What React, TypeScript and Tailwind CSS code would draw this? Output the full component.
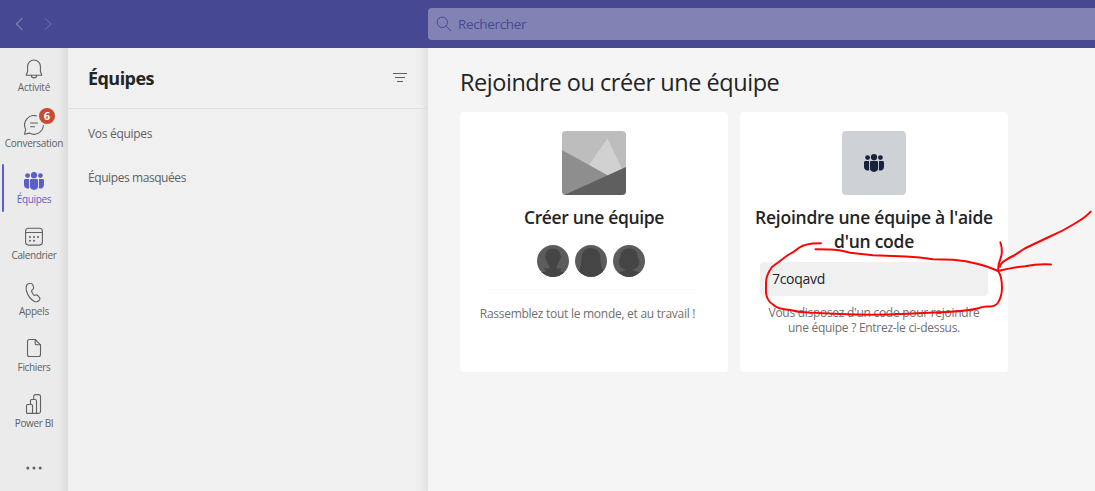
import React from "react";

const people = (
  <g fill="currentColor" stroke="none">
    <circle cx="10" cy="4.2" r="3.1" />
    <circle cx="3.6" cy="4.6" r="2.4" />
    <circle cx="16.4" cy="4.6" r="2.4" />
    <path d="M5.9 9.4Q5.9 8 7.3 8H12.7Q14.1 8 14.1 9.4V14.8A4.1 4.1 0 0 1 5.9 14.8Z" />
    <path d="M5 8V14.8Q5 16 5.4 17A3.6 3.6 0 0 1 0 13.8V9.4Q0 8 1.4 8Z" />
    <path d="M15 8V14.8Q15 16 14.6 17A3.6 3.6 0 0 0 20 13.8V9.4Q20 8 18.6 8Z" />
  </g>
);

const icons = {
  bell: (
    <>
      <path d="M2.2 16.2L3.6 12.5V7.4A6.4 6.4 0 0 1 16.4 7.4V12.5L17.8 16.2Z" />
      <path d="M7.3 16.2A2.7 2.7 0 0 0 12.7 16.2" />
    </>
  ),
  chat: (
    <>
      <path d="M12.4 .9A9.3 9.3 0 0 0 1.7 14.2L.6 19.2L5.5 18.1A9.3 9.3 0 0 0 19.3 10.5" />
      <path d="M6.5 8H13.5M6.5 11.8H10.5" />
    </>
  ),
  people,
  calendar: (
    <>
      <rect x="1.6" y="1.3" width="16.8" height="16.8" rx="3" />
      <path d="M1.6 5.5H18.4" />
      <g fill="currentColor" stroke="none">
        <circle cx="6" cy="10" r="1" /><circle cx="10" cy="10" r="1" /><circle cx="14" cy="10" r="1" />
        <circle cx="6" cy="13.8" r="1" /><circle cx="10" cy="13.8" r="1" />
      </g>
    </>
  ),
  phone: (
    <path d="M4.3 1.3L6 .8Q7.8 .4 8.5 2L9.5 4.4Q10 5.8 8.9 6.8L7.5 8.1Q7.9 10.7 10 13L11.6 12.5Q13 12.1 13.9 13.2L15.5 15.2Q16.5 16.5 15.3 17.7L14.5 18.5Q12.9 20.1 10.4 19Q4.5 15.5 2.5 8.5Q1.2 2.5 4.3 1.3Z" />
  ),
  file: (
    <>
      <path d="M5.4 1.5H11.2L16.5 6.8V16.5Q16.5 18.5 14.6 18.5H5.4Q3.5 18.5 3.5 16.5V3.5Q3.5 1.500 5.4 1.5Z" />
      <path d="M11.2 1.5V5.5Q11.200 6.8 12.5 6.8H16.5" />
    </>
  ),
  powerbi: (
    <>
      <path d="M9.7 5.5V2.5Q9.7 .6 11.6 .6H14.6Q16.5 .6 16.5 2.5V17.5Q16.5 19.4 14.6 19.4H3.5Q2.5 19.4 2.5 18.4V11.5Q2.5 10.5 3.5 10.5H7.5Q8.5 10.5 8.5 11.5V19.4" />
      <path d="M6.5 10.5V6.5Q6.5 5.5 7.5 5.5H11Q12.5 5.5 12.5 7V19.4" />
    </>
  ),
};

type RailItem = { label: string; icon: keyof typeof icons; track: string; shift?: string; badge?: string; active?: boolean };

const rail: RailItem[] = [
  { label: "Activité", icon: "bell", track: "tracking-[-0.2px]", shift: "translate-y-px" },
  { label: "Conversation", icon: "chat", track: "tracking-[-0.27px]", shift: "translate-y-px", badge: "6" },
  { label: "Équipes", icon: "people", track: "tracking-[-0.35px]", shift: "translate-y-px", active: true },
  { label: "Calendrier", icon: "calendar", track: "tracking-[-0.35px]", shift: "translate-y-px" },
  { label: "Appels", icon: "phone", track: "tracking-[-0.25px]", shift: "translate-y-[0.5px]" },
  { label: "Fichiers", icon: "file", track: "tracking-[-0.35px]" },
  { label: "Power BI", icon: "powerbi", track: "tracking-[-0.35px]" },
];

function RailButton({ item }: { item: RailItem }) {
  return (
    <li className={`relative flex h-14 flex-col items-center pt-[10px] ${item.active ? "text-[#5b5fc7]" : "text-[#616161]"}`}>
      {item.active && <span className="absolute left-[2px] top-1 h-12 w-[2px] rounded-full bg-[#5b5fc7]" />}
      <svg className={`h-5 w-5 shrink-0 ${item.shift ?? ""}`} viewBox="0 0 20 20" fill="none" stroke="currentColor" strokeWidth="1.1" strokeLinejoin="round" strokeLinecap="round">
        {icons[item.icon]}
      </svg>
      {item.badge && (
        <span className="absolute left-[39px] top-1 flex h-4 w-4 items-center justify-center rounded-full bg-[#cc4a31] text-[11px] font-bold leading-4 text-white">
          {item.badge}
        </span>
      )}
      <span className={`whitespace-nowrap text-[10px] leading-[18px] ${item.track}`}>{item.label}</span>
    </li>
  );
}

const hair = [
  "M16 3.5C11 3.5 8.5 7 8.8 10C7.3 11 8.3 15 10 16C10.500 19 12 20 12.3 21V23.500L7 23.500Q8 25 10 26L4 27.500Q9 32 16 32T28 27.500L22 26Q24 25 25 23.500L19.700 23.500V21C20 20 21.500 19 22 16C23.700 15 24.700 11 23.2 10C23.500 7 21 3.5 16 3.5Z",
  "M16 3C9.500 3 7 7.500 6.700 12C6.500 18 5.500 23 3.500 26Q9 32 16 32T28.500 26C26.500 23 25.500 18 25.300 12C25 7.500 22.500 3 16 3Z",
  "M16 3.500C10 3.500 7.500 7.500 7.300 12C5 14.500 5.500 20 7.500 22C9 23.800 11 24 12.500 24.500Q12 26 6 27Q10 32 16 32T26 27Q20 26 19.500 24.500C21 24 23 23.800 24.500 22C26.500 20 27 14.500 24.700 12C24.500 7.500 22 3.500 16 3.500Z",
];

export default function App() {
  return (
    <div className="relative flex h-[491px] w-[1095px] flex-col overflow-hidden bg-[#f5f5f5] font-['Open_Sans','Noto_Sans',sans-serif] text-[#242424]">
      <header className="flex h-12 shrink-0 bg-[#464991]">
        <div className="flex w-[428px] items-center gap-[21px] pl-[15px]">
          <svg className="h-3 w-2" viewBox="0 0 8 12" fill="none" stroke="#8486b6" strokeWidth="1.1"><path d="M7.3 .2L1.3 6L7.3 11.8" /></svg>
          <svg className="h-3 w-2" viewBox="0 0 8 12" fill="none" stroke="#6769a5" strokeWidth="1.1"><path d="M1 .2L7 6L1 11.8" /></svg>
        </div>
        <div className="mt-2 flex h-8 flex-1 items-center gap-[6px] rounded-l-[4px] bg-[#8283b4] pl-2 text-[#464991]">
          <svg className="h-4 w-4" viewBox="0 0 16 16" fill="none" stroke="currentColor" strokeWidth="1"><circle cx="6.3" cy="6.3" r="5.2" /><path d="M10.1 10.1L15 15" /></svg>
          <span className="text-[13.5px] leading-5 tracking-[-0.35px]">Rechercher</span>
        </div>
      </header>
      <div className="flex min-h-0 flex-1">
        <nav className="w-[68px] shrink-0 bg-[linear-gradient(to_right,#ebebeb_58px,#dcdcdc_68px)]">
          <ul>
            {rail.map((item) => <RailButton key={item.label} item={item} />)}
          </ul>
          <div className="flex h-14 items-center justify-center">
            <svg className="h-1 w-4" viewBox="0 0 16 4" fill="#616161"><circle cx="1.8" cy="2" r="1.5" /><circle cx="8" cy="2" r="1.5" /><circle cx="14.2" cy="2" r="1.5" /></svg>
          </div>
        </nav>
        <aside className="w-[360px] shrink-0 bg-[linear-gradient(to_right,#f0f0f0_350px,#e2e2e2_360px)]">
          <div className="flex h-[61px] items-center justify-between border-b border-[#e0e0e0] pl-5 pr-[21px]">
            <h1 className="text-[18px] font-bold leading-6 tracking-[-0.55px]">Équipes</h1>
            <svg className="h-[10px] w-[14px]" viewBox="0 0 14 10" stroke="#616161" strokeWidth="1"><path d="M0 .5H14M2 4.5H12M4 8.5H10" /></svg>
          </div>
          <div className="flex flex-col gap-6 pl-5 pt-[15px] text-[12px] leading-5 text-[#616161]">
            <span className="tracking-[-0.3px]">Vos équipes</span>
            <span className="tracking-[-0.42px]">Équipes masquées</span>
          </div>
        </aside>
        <main className="flex-1 pl-8 pt-[18px]">
          <h2 className="h-[46px] whitespace-nowrap text-[23.5px] leading-8 tracking-[-0.46px]">Rejoindre ou créer une équipe</h2>
          <div className="flex gap-3">
            <section className="flex h-[260px] w-[268px] flex-col items-center rounded-[4px] bg-white pt-[19px]">
              <svg className="h-16 w-16 rounded-[4px]" viewBox="0 0 64 64">
                <path fill="#bdbdbd" d="M0 0H64V64H0Z" />
                <path fill="#d1d1d1" d="M45.5 7.5L27 34L45.5 45L60 38Z" />
                <path fill="#8e8e8e" d="M0 19L46 44.5L3 64H0Z" />
                <path fill="#5f5f5f" d="M64 36V64H2Z" />
              </svg>
              <h3 className="mt-[10px] whitespace-nowrap text-[17.5px] font-semibold leading-6 tracking-[-0.35px]">Créer une équipe</h3>
              <div className="mr-[6px] mt-4 flex gap-[6px]">
                {hair.map((d) => (
                  <svg key={d} className="h-8 w-8 rounded-full" viewBox="0 0 32 32"><path fill="#5c5c5c" d="M0 0H32V32H0Z" /><path fill="#454545" d={d} /></svg>
                ))}
              </div>
              <div className="mt-3 w-[214px] border-t border-[#fafafa]" />
              <p className="mr-[13px] mt-4 whitespace-nowrap text-[12px] leading-[15px] tracking-[-0.27px] text-[#707070]">Rassemblez tout le monde, et au travail !</p>
            </section>
            <section className="flex h-[260px] w-[268px] flex-col items-center rounded-[4px] bg-white pt-[19px]">
              <div className="flex h-16 w-16 shrink-0 items-center justify-center rounded-[4px] bg-[#ced1d6] text-[#17233d]">
                <svg className="h-5 w-5" viewBox="0 0 20 20">{people}</svg>
              </div>
              <h3 className="mt-[10px] whitespace-nowrap text-center text-[17.5px] font-semibold leading-6 tracking-[-0.25px]">Rejoindre une équipe à l'aide<br />d'un code</h3>
              <div className="mt-[9px] flex h-[34px] w-[228px] shrink-0 items-center rounded-[4px] bg-[#f0f0f0] px-3 pb-px text-[14px] leading-5 tracking-[-0.3px]"><span>7coqavd</span></div>
              <p className="mt-[9px] whitespace-nowrap text-center text-[12px] leading-[15px] tracking-[-0.28px] text-[#707070]">Vous disposez d'un code pour rejoindre<br />une équipe ? Entrez-le ci-dessus.</p>
            </section>
          </div>
        </main>
      </div>
      <svg className="pointer-events-none absolute left-[760px] top-[200px] h-[125px] w-[335px]" viewBox="760 200 335 125" fill="none" stroke="#fc0404" strokeWidth="1.95" strokeLinecap="round" strokeLinejoin="round">
        <path d="M821 243.3Q806 243 799 247.7Q794 252 788 255L772 267Q766 275 766 283V293Q767 301 773 304.5Q777 309 790 310Q799 312.5 810 312.6L840 314Q873 315.5 907 313.7L940 312.3Q970 311 979 308Q983 306.5 987 306.5Q995 307 998 302.7Q1002 296 1002 288Q1002 276 998 271Q987 266 978 264Q966 260.5 953 259.7L933 259.3Q920 257 906 256.5L873 255.3L850 252.7Q838 249.5 830 249.5L815.5 249.3" />
        <path d="M1090.7 211.7Q1085 218 1074 224Q1063 231 1050 236.5L1033 244.5Q1024 248 1015 255Q1000 262 1000 266.7" />
        <path d="M1000.3 242.3Q1003 250 1001 257Q998 264 998 271Q1015 267 1025 266.2Q1038 263.7 1051 264.5" />
      </svg>
    </div>
  );
}
